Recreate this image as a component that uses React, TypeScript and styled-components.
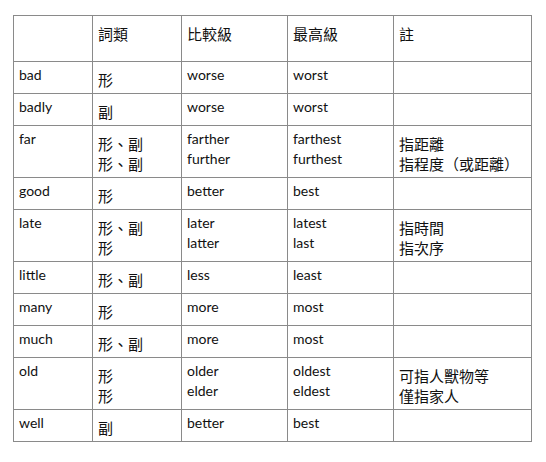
import styled, { createGlobalStyle } from 'styled-components'

const GlobalStyle = createGlobalStyle`
  html, body {
    margin: 0;
    padding: 0;
    background: #fff;
  }
  body {
    font-family: Lato, "Noto Sans CJK TC", sans-serif;
    color: #111;
  }
`

type Row = {
  word: string
  pos: string[]
  comp: string[]
  sup: string[]
  note: string[]
}

const rows: Row[] = [
  { word: 'bad', pos: ['形'], comp: ['worse'], sup: ['worst'], note: [] },
  { word: 'badly', pos: ['副'], comp: ['worse'], sup: ['worst'], note: [] },
  {
    word: 'far',
    pos: ['形、副', '形、副'],
    comp: ['farther', 'further'],
    sup: ['farthest', 'furthest'],
    note: ['指距離', '指程度（或距離）'],
  },
  { word: 'good', pos: ['形'], comp: ['better'], sup: ['best'], note: [] },
  {
    word: 'late',
    pos: ['形、副', '形'],
    comp: ['later', 'latter'],
    sup: ['latest', 'last'],
    note: ['指時間', '指次序'],
  },
  { word: 'little', pos: ['形、副'], comp: ['less'], sup: ['least'], note: [] },
  { word: 'many', pos: ['形'], comp: ['more'], sup: ['most'], note: [] },
  { word: 'much', pos: ['形、副'], comp: ['more'], sup: ['most'], note: [] },
  {
    word: 'old',
    pos: ['形', '形'],
    comp: ['older', 'elder'],
    sup: ['oldest', 'eldest'],
    note: ['可指人獸物等', '僅指家人'],
  },
  { word: 'well', pos: ['副'], comp: ['better'], sup: ['best'], note: [] },
]

const Page = styled.div`
  padding: 15px 0 0 13px;
`

const Table = styled.table`
  border-collapse: collapse;
  table-layout: fixed;
  width: 518px;
`

const Col = styled.col<{ $w: number }>`
  width: ${(p) => p.$w}px;
`

const Tr = styled.tr<{ $h: number }>`
  height: ${(p) => p.$h}px;
`

const Td = styled.td`
  border: 1px solid #8a8a8a;
  padding: 0 6px 0 5px;
  vertical-align: top;
`

const Latin = styled.div`
  padding-top: 3px;
  font-family: Lato, sans-serif;
  font-size: 14px;
  line-height: 20px;
`

const Cjk = styled.div`
  padding-top: 8px;
  font-family: "Noto Sans CJK TC", sans-serif;
  font-size: 15px;
  line-height: 20px;
  white-space: nowrap;
`

const Lines = ({ items, cjk }: { items: string[]; cjk?: boolean }) => {
  const Box = cjk ? Cjk : Latin
  return (
    <Box>
      {items.map((t, i) => (
        <div key={i}>{t}</div>
      ))}
    </Box>
  )
}

const App = () => {
  return (
    <>
      <GlobalStyle />
      <Page>
        <Table>
          <colgroup>
            <Col $w={79} />
            <Col $w={89} />
            <Col $w={106} />
            <Col $w={106} />
            <Col $w={138} />
          </colgroup>
          <tbody>
            <Tr $h={46}>
              <Td />
              <Td>
                <Lines cjk items={['詞類']} />
              </Td>
              <Td>
                <Lines cjk items={['比較級']} />
              </Td>
              <Td>
                <Lines cjk items={['最高級']} />
              </Td>
              <Td>
                <Lines cjk items={['註']} />
              </Td>
            </Tr>
            {rows.map((r) => (
              <Tr key={r.word} $h={r.pos.length > 1 ? 52 : 32}>
                <Td>
                  <Lines items={[r.word]} />
                </Td>
                <Td>
                  <Lines cjk items={r.pos} />
                </Td>
                <Td>
                  <Lines items={r.comp} />
                </Td>
                <Td>
                  <Lines items={r.sup} />
                </Td>
                <Td>
                  <Lines cjk items={r.note} />
                </Td>
              </Tr>
            ))}
          </tbody>
        </Table>
      </Page>
    </>
  )
}

export default App
